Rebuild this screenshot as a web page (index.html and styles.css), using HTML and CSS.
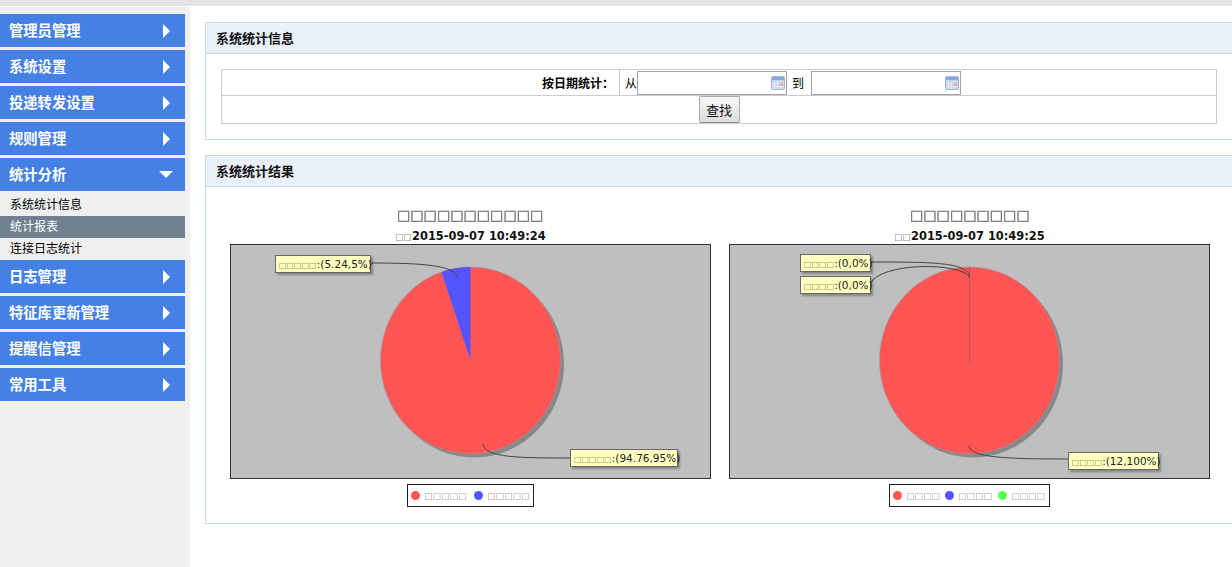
FILE: index.html
```html
<!DOCTYPE html>
<html lang="zh">
<head>
<meta charset="utf-8">
<title>系统统计信息</title>
<link rel="stylesheet" href="styles.css">
</head>
<body>
<div class="topbar"></div>
<div class="layout">
  <nav class="sidebar">
    <div class="menu"><span>管理员管理</span><i class="arrow-right"></i></div>
    <div class="menu"><span>系统设置</span><i class="arrow-right"></i></div>
    <div class="menu"><span>投递转发设置</span><i class="arrow-right"></i></div>
    <div class="menu"><span>规则管理</span><i class="arrow-right"></i></div>
    <div class="menu open"><span>统计分析</span><i class="arrow-down"></i></div>
    <ul class="submenu">
      <li class="first">系统统计信息</li>
      <li class="active">统计报表</li>
      <li>连接日志统计</li>
    </ul>
    <div class="menu"><span>日志管理</span><i class="arrow-right"></i></div>
    <div class="menu"><span>特征库更新管理</span><i class="arrow-right"></i></div>
    <div class="menu"><span>提醒信管理</span><i class="arrow-right"></i></div>
    <div class="menu"><span>常用工具</span><i class="arrow-right"></i></div>
  </nav>
  <main class="main">
    <section class="panel">
      <h2 class="panel-head">系统统计信息</h2>
      <div class="panel-body">
        <table class="search">
          <tr class="row-date">
            <th>按日期统计：</th>
            <td>
              <div class="dates">
                <span>从</span>
                <label class="date"><input type="text">
                  <svg class="cal" viewBox="0 0 14 14"><rect x=".5" y=".5" width="13" height="13" rx="1" fill="#c6d5ee" stroke="#aab6c8"/><rect x="1" y="1" width="12" height="3" fill="#86a8e6"/><path d="M3.500 5v8M6.500 5v8M9.500 5v8M1 7.500h12M1 10.500h12" stroke="#e6ecf6"/><rect x="9" y="7" width="3" height="3" fill="#f2a48c"/></svg>
                </label>
                <span class="to">到</span>
                <label class="date"><input type="text">
                  <svg class="cal" viewBox="0 0 14 14"><rect x=".5" y=".5" width="13" height="13" rx="1" fill="#c6d5ee" stroke="#aab6c8"/><rect x="1" y="1" width="12" height="3" fill="#86a8e6"/><path d="M3.500 5v8M6.500 5v8M9.500 5v8M1 7.500h12M1 10.500h12" stroke="#e6ecf6"/><rect x="9" y="7" width="3" height="3" fill="#f2a48c"/></svg>
                </label>
              </div>
            </td>
          </tr>
          <tr class="row-btn">
            <td colspan="2"><button type="button" class="btn">查找</button></td>
          </tr>
        </table>
      </div>
    </section>

    <section class="panel">
      <h2 class="panel-head">系统统计结果</h2>
      <div class="charts">
        <figure class="chart">
          <div class="chart-title">□□□□□□□□□□□</div>
          <div class="chart-sub"><span class="tofu">□□</span>2015-09-07 10:49:24</div>
          <div class="plot">
            <svg class="pie" viewBox="0 0 479 233">
              <ellipse cx="243" cy="119" rx="90" ry="93.500" fill="#888"/>
              <ellipse cx="239.500" cy="115.500" rx="90" ry="93.500" fill="#f55" stroke="#999" stroke-width=".6"/>
              <path d="M239.500 115.500V22A90 93.500 0 0 0 210.400 27Z" fill="#55f"/>
              <path d="M139 18C190 18 225 20 226.500 33" class="lead"/>
              <path d="M339 213C290 213 254 213 252 199" class="lead"/>
            </svg>
            <div class="tip tip-a1"><span class="box">□□□□□</span>:(5.24,5%)</div>
            <div class="tip tip-a2"><span class="box">□□□□□</span>:(94.76,95%)</div>
          </div>
          <div class="legend">
            <span class="item"><i class="dot red"></i><span class="box">□□□□□</span></span>
            <span class="item"><i class="dot blue"></i><span class="box">□□□□□</span></span>
          </div>
        </figure>
        <figure class="chart">
          <div class="chart-title">□□□□□□□□□</div>
          <div class="chart-sub"><span class="tofu">□□</span>2015-09-07 10:49:25</div>
          <div class="plot">
            <svg class="pie" viewBox="0 0 479 233">
              <ellipse cx="243" cy="119" rx="90" ry="93.500" fill="#888"/>
              <ellipse cx="239.500" cy="115.500" rx="90" ry="93.500" fill="#f55" stroke="#999" stroke-width=".6"/>
              <path d="M239.500 22V118" stroke="#b55" stroke-width="1"/>
              <path d="M140 17C200 17 239 17 239.500 32" class="lead"/>
              <path d="M140 39C150 17 230 17 239.500 32" class="lead"/>
              <path d="M338 214C280 214 240 213 239 201" class="lead"/>
            </svg>
            <div class="tip tip-b1"><span class="box">□□□□</span>:(0,0%)</div>
            <div class="tip tip-b2"><span class="box">□□□□</span>:(0,0%)</div>
            <div class="tip tip-b3"><span class="box">□□□□</span>:(12,100%)</div>
          </div>
          <div class="legend legend-three">
            <span class="item"><i class="dot red"></i><span class="box">□□□□</span></span>
            <span class="item"><i class="dot blue"></i><span class="box">□□□□</span></span>
            <span class="item"><i class="dot green"></i><span class="box">□□□□</span></span>
          </div>
        </figure>
      </div>
    </section>
  </main>
</div>
</body>
</html>
```
FILE: styles.css
```css
* { box-sizing: border-box; }
html, body { margin: 0; height: 100%; overflow: hidden; background: #fff; }
body { font-family: "Noto Sans CJK SC", "Liberation Sans", sans-serif; font-size: 12px; color: #000; }

.topbar { height: 6px; background: #e4e4e4; }
.layout { display: flex; padding-top: 1px; height: 561px; }

.sidebar { flex: 0 0 190px; background: #efefef; padding: 7px 5px 0 0; }
.menu {
  display: flex; align-items: center; justify-content: space-between;
  height: 33px; margin-bottom: 3px; padding: 0 15px 0 9px;
  background: #4580e4; color: #fff; font-size: 14.3px; font-weight: 700;
}
.menu span { line-height: 20px; margin-top: -2px; }
.menu.open { margin-bottom: 0; }
.arrow-right { width: 0; height: 0; border-left: 7px solid #fff; border-top: 7px solid transparent; border-bottom: 7px solid transparent; }
.arrow-down { width: 0; height: 0; margin-right: -3px; border-top: 7px solid #fff; border-left: 7px solid transparent; border-right: 7px solid transparent; }
.submenu { list-style: none; margin: 0; padding: 0; }
.submenu li { height: 22px; line-height: 20px; padding-left: 10px; font-size: 12px; }
.submenu li.first { height: 25px; line-height: 26px; }
.submenu li.active { background: #708090; color: #fff; }

.main { flex: 0 0 1060px; padding: 15px 0 0 15px; }
.panel { border: 1px solid #c5d9ee; margin-bottom: 15px; }
.panel-head {
  margin: 0; height: 31px; padding-left: 10px; line-height: 30px;
  background: #e9f0f9; border-bottom: 1px solid #c5d9ee;
  font-size: 13px; font-weight: 700; color: #111;
}
.panel-body { padding: 15px; }

.search { width: 996px; border-collapse: collapse; border: 1px solid #ccc; }
.search th, .search td { border: 1px solid #ccc; padding: 0; }
.row-date { height: 26px; }
.row-date th { width: 398px; padding-right: 5px; text-align: right; font-size: 12px; font-weight: 700; }
.row-btn { height: 28px; }
.row-btn td { text-align: center; line-height: 0; }
.dates { display: flex; align-items: center; padding-left: 5px; height: 24px; }
.to { margin: 0 7px 0 5px; }
.date { position: relative; display: block; width: 150px; height: 24px; }
.date input { display: block; width: 150px; height: 24px; border: 1px solid #a3a3a3; padding: 0 18px 0 3px; background: #fff; }
.cal { position: absolute; top: 5px; right: 2px; width: 14px; height: 14px; }
.btn {
  width: 41px; height: 27px; padding: 0; margin: 0; vertical-align: middle;
  border: 1px solid #a8a8a8; border-bottom-color: #8f8f8f; border-radius: 2px;
  background: linear-gradient(#f8f8f8, #dcdcdc);
  font-family: "Noto Sans CJK SC", sans-serif; font-size: 13px; color: #111;
}

.charts { display: flex; gap: 18px; height: 336px; padding: 20px 0 0 24px; }
.chart { flex: 0 0 481px; margin: 0; display: flex; flex-direction: column; align-items: center; }
.chart-title {
  height: 22px; line-height: 16px; font-family: "DejaVu Sans", sans-serif; font-size: 14.5px; letter-spacing: -.4px;
  color: #777; -webkit-text-stroke: .4px #777; will-change: transform; white-space: nowrap;
}
.chart-sub { height: 15px; line-height: 15px; font-family: "DejaVu Sans", sans-serif; font-size: 11.4px; font-weight: 700; color: #111; white-space: nowrap; }
.tofu { display: inline-block; font-weight: 400; font-size: 8.8px; color: #888; will-change: transform; }
.plot { position: relative; width: 481px; height: 235px; border: 1px solid #333; background: #bfbfbf; }
.pie { display: block; width: 479px; height: 233px; }
.lead { fill: none; stroke: #444; stroke-width: 1; }
.tip {
  position: absolute; height: 18px; line-height: 16px; padding: 0 3px; white-space: nowrap;
  background: #ffffc0; border: 1px solid #666; box-shadow: 2px 2px 2px rgba(0,0,0,.3);
  font-family: "DejaVu Sans", sans-serif; font-size: 10.5px; color: #222;
}
.tip .box { display: inline-block; font-size: 8px; color: #9a9460; will-change: transform; }
.tip-a1 { left: 44px; top: 10px; width: 96px; }
.tip-a2 { left: 339px; top: 204px; width: 108px; }
.tip-b1 { left: 70px; top: 9px; width: 71px; }
.tip-b2 { left: 70px; top: 31px; width: 71px; }
.tip-b3 { left: 338px; top: 207px; width: 91px; }

.legend {
  display: inline-flex; align-items: center; gap: 7px; height: 23px; margin-top: 5px; padding: 0 4px 0 3px;
  border: 1px solid #222; background: #fff;
  font-family: "DejaVu Sans", sans-serif; white-space: nowrap;
}
.legend-three { gap: 5px; }
.legend .box { display: inline-block; font-size: 9px; color: #aaa; will-change: transform; }
.item { display: inline-flex; align-items: center; gap: 4px; }
.dot { width: 9px; height: 9px; border-radius: 50%; }
.red { background: #f55; }
.blue { background: #55f; }
.green { background: #5f5; }
```
